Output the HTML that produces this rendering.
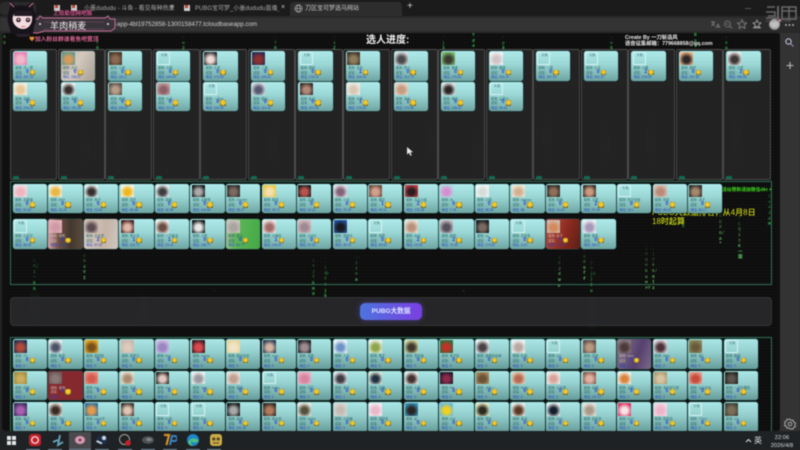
<!DOCTYPE html>
<html lang="zh"><head><meta charset="utf-8"><title>刀区宝可梦选马网站</title>
<style>
*{box-sizing:border-box;margin:0;padding:0}
html,body{width:800px;height:450px;overflow:hidden;background:#232323}
body{font-family:"Liberation Sans","Noto Sans CJK SC",sans-serif;position:relative}
#w{position:absolute;inset:0;filter:blur(.4px)}
.a{position:absolute}
#tabs{left:0;top:0;width:800px;height:17px;background:#1b1b1b}
#bar{left:0;top:16px;width:800px;height:17px;background:#292929}
#field{left:0;top:18px;width:747px;height:13px;background:#333;border-radius:0 7px 7px 0}
.t{font-size:6px;color:#a9a9a9;white-space:nowrap;line-height:8px}
#page{left:2px;top:33px;width:778px;height:398px;border-radius:4px;overflow:hidden;background-color:#0b0b0b;background-image:linear-gradient(90deg,#121212 1px,transparent 1px),linear-gradient(#121212 1px,transparent 1px);background-size:3px 3px}
#side{left:780px;top:33px;width:20px;height:399px;background:#333}
#task{left:0;top:431px;width:800px;height:19px;background:#1f2224}
.r{position:absolute;width:5px;font:bold 4.6px/5.6px "Liberation Mono",monospace;color:#35b04a;word-break:break-all;-webkit-mask-image:linear-gradient(transparent,#000 80%)}
.st{position:absolute;width:10px;background:linear-gradient(transparent,rgba(50,120,50,.22),transparent);border-radius:5px}
#cols{left:8px;top:15.5px;width:761px;height:131px;display:grid;grid-template-columns:repeat(16,1fr)}
.col{background:rgba(36,36,36,.94);border:1.5px solid #4b4b4b;border-radius:2px;margin-right:.4px;padding:1.6px 0 0 2px;position:relative}
.col::after{content:"";position:absolute;left:2px;bottom:-.5px;width:6px;height:2.6px;background:#0f6b52;border-radius:1px 1px 0 0}
.k{position:relative;width:34.3px;height:29.6px;border-radius:2.5px;background:linear-gradient(#aeeaea 0,#9ad6d4 45%,#6ea5a3 100%);box-shadow:0 0 0 .5px #234c49;margin-bottom:1.1px;overflow:hidden;display:block}
.h{background:linear-gradient(#aae6e6 0,#94cfcd 45%,#669c9a 100%);box-shadow:0 0 0 .7px #123330}
.k i{position:absolute;left:1.2px;top:1px;width:13px;height:12.5px;border-radius:.8px;background:radial-gradient(circle at 50% 58%,var(--b) 30%,var(--a) 78%)}
.k i.n{background:none;border:.4px solid #d6f2f2;font:normal 3.2px/4px "Liberation Sans","Noto Sans CJK SC",sans-serif;color:#4f8080;padding-left:3px}
.k p{position:absolute;left:2.4px;font-size:3.2px;line-height:4px;color:#276464;white-space:nowrap}
.k p:nth-of-type(1){top:14.8px}
.k p:nth-of-type(2){top:19.6px}
.k p:nth-of-type(3){top:24.2px;color:#2444c4}
.k p:nth-of-type(2)::after{content:"";position:absolute;left:14.6px;top:-1px;width:5.4px;height:5.4px;border-radius:1.2px;background:radial-gradient(circle at 50% 42%,#f5c828 45%,#4d4a24 82%)}
.k b{position:absolute;left:13px;top:18.7px;font-size:5px;line-height:5.6px;color:#2444cc}
.g{position:absolute;display:grid;column-gap:1.25px}
.box{position:absolute;border:1px solid #2f6f57}
.s1{background:linear-gradient(120deg,#b9ada5,#d2c9bf 45%,#a69c92)}
.s2{background:linear-gradient(90deg,#d8a5ad 0,#6e5045 30%,#43382f 65%,#5a4a3e)}
.s3{background:linear-gradient(100deg,#d5cec8,#c5b3a6 60%,#cfc7c1)}
.s4{background:linear-gradient(100deg,#b6c0b0 0,#5cb558 35%,#43a845)}
.s5{background:linear-gradient(110deg,#b4524a,#8d2a20 55%,#5a2016)}
.s6{background:#85292f}
.s7{background:linear-gradient(110deg,#827a8a,#57406f 60%,#7a6a88)}
.s2 p,.s5 p,.s6 p,.s7 p{color:#c9b8a8}
.y{position:absolute;color:#d2df14;font-size:8px;line-height:9px;white-space:nowrap;font-weight:500}
.tb{position:absolute;top:433px;width:14px;height:14px;opacity:.92}
.ul{position:absolute;top:449px;height:1px;width:14px;background:#7c92a4}
</style></head><body><div id="w">

<div class="a" id="tabs"></div>
<div class="a" style="left:290px;top:2px;width:112px;height:15px;background:#2d2d2d;border-radius:4px 4px 0 0"></div>
<div class="a" id="bar"></div>
<div class="a" id="field"></div>
<div class="a" style="left:0;top:2px;width:36px;height:13px;background:#2b2b2b;border-radius:4px"></div>

<svg class="a" style="left:54px;top:4px" width="30" height="9"><rect x="0" y="1" width="6" height="6" fill="#ccc"/><rect x="1" y="1" width="3" height="3" fill="#b43"/><rect x="17" y="1" width="6" height="6" fill="#ccc"/><rect x="18" y="1" width="3" height="3" fill="#b43"/></svg>
<div class="a t" style="left:84px;top:5px">小墨dududu - 斗鱼 - 看见每种热爱</div>
<div class="a t" style="left:170px;top:4px;font-size:7px;color:#ccc">×</div>
<svg class="a" style="left:184px;top:4px" width="8" height="9"><rect x="0" y="1" width="6" height="6" fill="#ccc"/><rect x="1" y="1" width="3" height="3" fill="#b43"/></svg>
<div class="a t" style="left:195px;top:5px;width:84px;overflow:hidden">PUBG宝可梦_小墨dududu直播_小</div>
<div class="a t" style="left:281px;top:4px;font-size:7px;color:#ccc">×</div>
<svg class="a" style="left:294px;top:4px" width="9" height="9" fill="none" stroke="#aaa" stroke-width=".7"><circle cx="4.5" cy="4.5" r="3.6"/><ellipse cx="4.5" cy="4.5" rx="1.6" ry="3.6"/><path d="M1 4.5h7"/></svg>
<div class="a t" style="left:305px;top:5px;color:#c9c9c9">刀区宝可梦选马网站</div>
<div class="a t" style="left:407px;top:3px;font-size:10px;color:#ccc">+</div>
<div class="a" style="left:745px;top:7.5px;width:6px;height:1px;background:#555"></div>

<div class="a t" style="left:115px;top:21px;color:#cfcfcf;font-size:6.2px">-app-4bl19752858-1300158477.tcloudbaseapp.com</div>
<svg class="a" style="left:708px;top:18px" width="90" height="13" fill="none" stroke="#808080" stroke-width=".8"><path d="M3 4h4M5 3v1M3.5 8 6.5 4.5M4 5l3 3M8 10l2-4 2 4M8.7 8.8h2.6"/><circle cx="19.5" cy="6" r="3"/><path d="M18 6h3M21.7 8.2 24 10.3"/><path d="M34 1.8l1.4 3 3.2.3-2.4 2.1.8 3.2-3-1.7-3 1.7.8-3.2-2.4-2.1 3.2-.3z"/><path stroke="#aaa" d="M49 2l1.2 2.6 2.8.3-2.1 1.9.7 2.8-2.6-1.5-2.6 1.5.7-2.8-2.1-1.9 2.8-.3zM45 9.8h8"/><g stroke="none" fill="#aaa"><circle cx="78" cy="7" r="1"/><circle cx="81.5" cy="7" r="1"/><circle cx="85" cy="7" r="1"/></g></svg>
<div class="a" style="left:769px;top:19px;width:11px;height:11px;border-radius:50%;background:radial-gradient(circle at 50% 40%,#c0c0c0 40%,#7a7a7a 80%)"></div>
<div class="a" style="left:778px;top:19px;width:3px;height:3px;border-radius:50%;background:#e9a"></div>

<svg class="a" style="left:765px;top:5px" width="33" height="18" fill="none" stroke="#666" stroke-width="1.6"><path d="M2 2h8M1 7h9v4H3M1 13h11"/><path d="M13 1v15" stroke-width="2"/><rect x="17" y="2" width="14" height="12"/><path d="M17 6h14M24 2v12"/></svg>
<div class="a t" style="left:766px;top:17px;font-size:4px;color:#666">DOUYU.COM</div>

<div class="a" id="page">
 <div class="r" style="left:1px;top:2px;height:16px;-webkit-mask-image:none;color:#3d8f3f">AU</div>
 <div class="r" style="left:94px;top:2px;height:14px">Kf9</div>
 <div class="r" style="left:180px;top:2px;height:14px">Xm2</div>
 <div class="r" style="left:272px;top:2px;height:14px">c7Q</div>
 <div class="r" style="left:331px;top:2px;height:14px">t1Z</div>
 <div class="r" style="left:440px;top:2px;height:14px">Vj3</div>
 <div class="r" style="left:470px;top:0;height:16px;-webkit-mask-image:none;color:#2fb84a">Yd4k</div>
 <div class="r" style="left:500px;top:2px;height:14px">Hp8</div>
 <div class="r" style="left:608px;top:2px;height:14px">Lw5</div>
 <div class="r" style="left:692px;top:0;height:16px;-webkit-mask-image:none;color:#2fb84a">Rn6</div>
 <div class="r" style="left:723px;top:2px;height:14px">E0u</div>

 <div class="r" style="left:31px;top:220px;height:44px">i0N]1~KS</div>
 <div class="r" style="left:81px;top:215px;height:34px;color:#58c860">-U04VI</div>
 <div class="r" style="left:310px;top:220px;height:44px">6h0J7KM9</div>
 <div class="r" style="left:322px;top:222px;height:44px">1~I中T7j0</div>
 <div class="r" style="left:353px;top:217px;height:39px;color:#58c860">C\~17&gt;A</div>
 <div class="r" style="left:556px;top:217px;height:44px;color:#78d870">TTCJdWF</div>
 <div class="r" style="left:581px;top:216px;height:34px;color:#68d060">tOONff</div>
 <div class="r" style="left:588px;top:222px;height:44px">CUu[OjIu</div>
 <div class="r" style="left:643px;top:208px;height:60px;color:#68d060">D1OUnkuw&gt;?</div>
 <div class="r" style="left:650px;top:208px;height:60px;color:#68d060">fr|7kK/NIz</div>
 <div class="r" style="left:717px;top:170px;height:50px;color:#68d060">Z9o@XG/A*</div>
 <div class="r" style="left:736px;top:172px;height:56px;color:#58c860">I0rCQ17K一面</div>
 <div class="r" style="left:766px;top:150px;height:50px">X3QeaJ#M</div>
 <div class="r" style="left:680px;top:180px;height:18px">d8Z</div>
 <div class="r" style="left:211px;top:256px;height:10px">7</div>
 <div class="r" style="left:460px;top:256px;height:10px">4</div>

 <div class="st" style="left:78px;top:85px;height:60px"></div>
 <div class="st" style="left:112px;top:70px;height:75px"></div>
 <div class="st" style="left:266px;top:80px;height:65px"></div>
 <div class="st" style="left:426px;top:70px;height:75px"></div>
 <div class="st" style="left:470px;top:90px;height:55px"></div>
 <div class="st" style="left:540px;top:70px;height:70px"></div>
 <div class="st" style="left:598px;top:80px;height:65px"></div>
 <div class="st" style="left:644px;top:70px;height:75px"></div>
 <div class="st" style="left:730px;top:60px;height:85px"></div>
 <div class="st" style="left:28px;top:255px;height:40px;background:linear-gradient(transparent,rgba(60,160,60,.16),transparent)"></div>
 <div class="st" style="left:136px;top:260px;height:36px;background:linear-gradient(transparent,rgba(60,160,60,.16),transparent)"></div>
 <div class="st" style="left:585px;top:262px;height:36px;background:linear-gradient(transparent,rgba(60,160,60,.22),transparent)"></div>

 <div class="a" id="cols">
  <div class="col">
   <div class="k"><i style="--a:#e87fb4;--b:#f3b7c9"></i><p>昵称: 牛一蛋</p><p>冠军:</p><b>0</b><p>地位: 267.16</p></div>
   <div class="k"><i style="--a:#f6efe0;--b:#e8c79a"></i><p>昵称: 初雨</p><p>冠军:</p><b>0</b><p>地位: 204.01</p></div>
  </div>
  <div class="col">
   <div class="k s1"><i style="--a:#5e9a8d;--b:#d89a5a"></i><p>昵称: 大白</p><p>冠军:</p><b>0</b><p>地位: 236.97</p></div>
   <div class="k"><i style="--a:#efefef;--b:#38302e"></i><p>昵称: 家明</p><p>冠军:</p><b>0</b><p>地位: 191.08</p></div>
  </div>
  <div class="col">
   <div class="k"><i style="--a:#4a3427;--b:#8a6a52"></i><p>昵称: 小夜</p><p>冠军:</p><b>0</b><p>地位: 181.2</p></div>
   <div class="k"><i style="--a:#5d4e45;--b:#b59d8a"></i><p>昵称: 老师</p><p>冠军:</p><b>0</b><p>地位: 206.67</p></div>
  </div>
  <div class="col">
   <div class="k"><i class="n">头像</i><p>昵称: 小熊</p><p>冠军:</p><b>0</b><p>地位: 349.94</p></div>
   <div class="k"><i style="--a:#c3a3a8;--b:#8d5f66"></i><p>昵称: 九朵</p><p>冠军:</p><b>0</b><p>地位: 217.6</p></div>
  </div>
  <div class="col">
   <div class="k"><i style="--a:#2e2a2c;--b:#ead9d4"></i><p>昵称: 小墨</p><p>冠军:</p><b>0</b><p>地位: 173.98</p></div>
   <div class="k"><i class="n">头像</i><p>昵称: 一只nn</p><p>冠军:</p><b>0</b><p>地位: 133.39</p></div>
  </div>
  <div class="col">
   <div class="k"><i style="--a:#2a2a55;--b:#8c3030"></i><p>昵称: 三鬼</p><p>冠军:</p><b>0</b><p>地位: 169.61</p></div>
   <div class="k"><i style="--a:#d8d8e0;--b:#55586e"></i><p>昵称: 狐仙</p><p>冠军:</p><b>0</b><p>地位: 110.42</p></div>
  </div>
  <div class="col">
   <div class="k"><i class="n">头像</i><p>昵称: 刚好</p><p>冠军:</p><b>0</b><p>地位: 278.13</p></div>
   <div class="k"><i style="--a:#3a2a26;--b:#b08878"></i><p>昵称: 彭元</p><p>冠军:</p><b>0</b><p>地位: 207.63</p></div>
  </div>
  <div class="col">
   <div class="k"><i style="--a:#3d3328;--b:#8e7a5c"></i><p>昵称: 化化</p><p>冠军:</p><b>1</b><p>地位: 424.42</p></div>
   <div class="k"><i style="--a:#f0ebe4;--b:#d8c6b4"></i><p>昵称: 大禾</p><p>冠军:</p><b>1</b><p>地位: 176.63</p></div>
  </div>
  <div class="col">
   <div class="k"><i style="--a:#dcdcdc;--b:#4a4a4a"></i><p>昵称: 阿土</p><p>冠军:</p><b>0</b><p>地位: 312.73</p></div>
   <div class="k"><i style="--a:#e8d5c6;--b:#c49b80"></i><p>昵称: 流水</p><p>冠军:</p><b>1</b><p>地位: 170.66</p></div>
  </div>
  <div class="col">
   <div class="k"><i style="--a:#79b86e;--b:#3b3a2e"></i><p>昵称: 佛宝</p><p>冠军:</p><b>0</b><p>地位: 275.53</p></div>
   <div class="k"><i style="--a:#e6e0dc;--b:#2a2526"></i><p>昵称: 老何</p><p>冠军:</p><b>0</b><p>地位: 108.42</p></div>
  </div>
  <div class="col">
   <div class="k"><i style="--a:#f3f3f3;--b:#cfc4c6"></i><p>昵称: 佛宝</p><p>冠军:</p><b>0</b><p>地位: 432.14</p></div>
   <div class="k"><i class="n">头像</i><p>昵称: 云菜川</p><p>冠军:</p><b>0</b><p>地位: 90.62</p></div>
  </div>
  <div class="col"><div class="k"><i class="n">头像</i><p>昵称: 一笑</p><p>冠军:</p><b>0</b><p>地位: 297.00</p></div></div>
  <div class="col"><div class="k"><i class="n">头像</i><p>昵称: 小五</p><p>冠军:</p><b>0</b><p>地位: 442.22</p></div></div>
  <div class="col"><div class="k"><i class="n">头像</i><p>昵称: 小鹿</p><p>冠军:</p><b>2</b><p>地位: 678.99</p></div></div>
  <div class="col"><div class="k"><i style="--a:#f0b48a;--b:#2c2624"></i><p>昵称: 胡材</p><p>冠军:</p><b>0</b><p>地位: 297.65</p></div></div>
  <div class="col"><div class="k"><i style="--a:#ede6e6;--b:#3d3536"></i><p>昵称: 小墨</p><p>冠军:</p><b>2</b><p>地位: 498.66</p></div></div>
 </div>

 <div class="box" style="left:7.5px;top:148px;width:762px;height:104px"></div>
 <div class="a" style="color:#3fe01e;font-size:4.8px;font-weight:bold;white-space:nowrap;top:153px;left:720px;width:50px;overflow:hidden">活动赞助请加微信dkt +</div>
 <div class="y" style="left:650px;top:174.5px">PUBG大数据排名，从4月8日</div>
 <div class="y" style="left:650px;top:184px">18时起算</div>
 <div class="g" style="left:10.7px;top:150.7px;grid-template-columns:repeat(20,34.3px);row-gap:4.7px">
  <div class="k"><i style="--a:#f4dbe0;--b:#eeb4c0"></i><p>昵称: 喜爱猫</p><p>冠军:</p><b>0</b><p>地位: 51.60</p></div>
  <div class="k"><i style="--a:#f2f0ea;--b:#e8b840"></i><p>昵称: AXX</p><p>冠军:</p><b>0</b><p>地位: 32.24</p></div>
  <div class="k"><i style="--a:#efefef;--b:#33302f"></i><p>昵称: 冉子</p><p>冠军:</p><b>0</b><p>地位: 23.60</p></div>
  <div class="k"><i style="--a:#f7f3e8;--b:#f0b820"></i><p>昵称: 霞气</p><p>冠军:</p><b>0</b><p>地位: 80.38</p></div>
  <div class="k"><i style="--a:#ededed;--b:#3e3e3e"></i><p>昵称: 周瑜</p><p>冠军:</p><b>0</b><p>地位: 42.99</p></div>
  <div class="k"><i style="--a:#161616;--b:#aaaaaa"></i><p>昵称: 无聊哥</p><p>冠军:</p><b>0</b><p>地位: 143.64</p></div>
  <div class="k"><i style="--a:#2e2b2a;--b:#7c6a60"></i><p>昵称: mmmm</p><p>冠军:</p><b>0</b><p>地位: 58.27</p></div>
  <div class="k"><i style="--a:#e9c840;--b:#f4dfb0"></i><p>昵称: 故班</p><p>冠军:</p><b>0</b><p>地位: 35.71</p></div>
  <div class="k"><i style="--a:#231a1a;--b:#b8544e"></i><p>昵称: 高雄</p><p>冠军:</p><b>0</b><p>地位: 42.32</p></div>
  <div class="k"><i style="--a:#e6dce0;--b:#80627a"></i><p>昵称: 少白</p><p>冠军:</p><b>0</b><p>地位: 70.29</p></div>
  <div class="k"><i style="--a:#6c4a3e;--b:#d5a18e"></i><p>昵称: 曦华</p><p>冠军:</p><b>1</b><p>地位: 40.11</p></div>
  <div class="k"><i style="--a:#c23a44;--b:#2a1c20"></i><p>昵称: 花石小妖</p><p>冠军:</p><b>2</b><p>地位: 178.38</p></div>
  <div class="k"><i style="--a:#b4d4e0;--b:#d58fd0"></i><p>昵称: 2k</p><p>冠军:</p><b>0</b><p>地位: 7.76</p></div>
  <div class="k"><i style="--a:#f2f6f4;--b:#d6dcd8"></i><p>昵称: 小薇</p><p>冠军:</p><b>0</b><p>地位: 88.38</p></div>
  <div class="k"><i style="--a:#efe6d8;--b:#d2b190"></i><p>昵称: sakuya</p><p>冠军:</p><b>0</b><p>地位: 88</p></div>
  <div class="k"><i style="--a:#2f2a24;--b:#90705a"></i><p>昵称: 阿枫</p><p>冠军:</p><b>0</b><p>地位: 14.03</p></div>
  <div class="k"><i style="--a:#3a2d26;--b:#c99a7e"></i><p>昵称: 文君</p><p>冠军:</p><b>2</b><p>地位: 97.99</p></div>
  <div class="k"><i class="n">头像</i><p>昵称: 吃仔省钱</p><p>冠军:</p><b>0</b><p>地位: 19.1</p></div>
  <div class="k"><i style="--a:#d8c0b4;--b:#b98a78"></i><p>昵称: 阿岳</p><p>冠军:</p><b>0</b><p>地位: 80.06</p></div>
  <div class="k"><i style="--a:#2e2a26;--b:#a6886e"></i><p>昵称: 泽子</p><p>冠军:</p><b>0</b><p>地位: 83.17</p></div>

  <div class="k"><i class="n">头像</i><p>昵称: 小月巴</p><p>冠军:</p><b>0</b><p>地位: 68.25</p></div>
  <div class="k s2"><i style="--a:#e3b2bb;--b:#cf9aa4"></i><p>昵称: 鸭鸭</p><p>冠军:</p><b>0</b><p>地位: 25.60</p></div>
  <div class="k s3"><i style="--a:#c9b7ac;--b:#5c4c52"></i><p>昵称: 大大虎</p><p>冠军:</p><b>2</b><p>地位: 67.02</p></div>
  <div class="k"><i style="--a:#4a2020;--b:#e0b8a8"></i><p>昵称: 黄小青</p><p>冠军:</p><b>1</b><p>地位: 102.71</p></div>
  <div class="k"><i style="--a:#f2ece6;--b:#6a4c44"></i><p>昵称: 一只猛龙</p><p>冠军:</p><b>1</b><p>地位: 23.41</p></div>
  <div class="k"><i style="--a:#141414;--b:#e6e6e6"></i><p>昵称: 小哲</p><p>冠军:</p><b>0</b><p>地位: 198.77</p></div>
  <div class="k s4"><i style="--a:#c9c4c0;--b:#aaa4a0"></i><p>昵称: 皮卡</p><p>冠军:</p><b>0</b><p>地位: 81.77</p></div>
  <div class="k"><i style="--a:#f2e6e4;--b:#a06a68"></i><p>昵称: 小神志</p><p>冠军:</p><b>1</b><p>地位: 104.47</p></div>
  <div class="k"><i style="--a:#d8b8bc;--b:#9e8a92"></i><p>昵称: 小000</p><p>冠军:</p><b>0</b><p>地位: 67.52</p></div>
  <div class="k"><i style="--a:#2452a0;--b:#1a1a1e"></i><p>昵称: 愤怒大</p><p>冠军:</p><b>0</b><p>地位: 39.19</p></div>
  <div class="k"><i class="n">头像</i><p>昵称: 胡贾</p><p>冠军:</p><b>0</b><p>地位: 83.63</p></div>
  <div class="k"><i style="--a:#eee0d4;--b:#b8927c"></i><p>昵称: AAS</p><p>冠军:</p><b>2</b><p>地位: 23.94</p></div>
  <div class="k"><i style="--a:#c8c0c4;--b:#54505a"></i><p>昵称: 欧阳</p><p>冠军:</p><b>2</b><p>地位: 72.59</p></div>
  <div class="k"><i style="--a:#181a1c;--b:#7a6a60"></i><p>昵称: xx</p><p>冠军:</p><b>2</b><p>地位: 173.62</p></div>
  <div class="k"><i class="n">头像</i><p>昵称: 芬伦色</p><p>冠军:</p><b>0</b><p>地位: 4.24</p></div>
  <div class="k s5"><i style="--a:#cdbdb4;--b:#d48a5c"></i><p>昵称: 赤子</p><p>冠军:</p><b>0</b><p>地位: 78.99</p></div>
  <div class="k"><i style="--a:#f2f0f2;--b:#a698b8"></i><p>昵称: 紫色</p><p>冠军:</p><b>0</b><p>地位: 58.17</p></div>
 </div>

 <div class="a" style="left:8px;top:263.5px;width:762px;height:29px;background:rgba(40,40,42,.96);border:1px solid #343436;border-radius:4px"></div>
 <div class="a" style="left:358px;top:269.7px;width:62px;height:17.5px;border-radius:5px;background:linear-gradient(90deg,#4d74de,#7a3fe2);box-shadow:0 0 6px rgba(110,90,240,.45);color:#dfe6ff;font-size:6.6px;font-weight:bold;text-align:center;line-height:17.5px">PUBG大数据</div>

 <div class="box" style="left:7.5px;top:303.7px;width:762px;height:100px"></div>
 <div class="g" id="g3" style="left:10.7px;top:306.4px;grid-template-columns:repeat(21,34.3px);row-gap:.7px">
  <div class="k h"><i style="--a:#233050;--b:#b04a3c"></i><p>昵称: TY</p><p>冠军:</p><b>0</b><p>地位: 0</p></div>
  <div class="k h"><i style="--a:#eeeeee;--b:#4a5468"></i><p>昵称: 私信</p><p>冠军:</p><b>0</b><p>地位: 0</p></div>
  <div class="k h"><i style="--a:#e6a824;--b:#78501c"></i><p>昵称: 眉须班</p><p>冠军:</p><b>0</b><p>地位: 0</p></div>
  <div class="k h"><i style="--a:#c8b8a8;--b:#dccabc"></i><p>昵称: 张学凡</p><p>冠军:</p><b>0</b><p>地位: 0</p></div>
  <div class="k h"><i style="--a:#cfc0e6;--b:#9a86c0"></i><p>昵称: hua</p><p>冠军:</p><b>0</b><p>地位: 0</p></div>
  <div class="k h"><i style="--a:#351a20;--b:#d84a4e"></i><p>昵称: momo</p><p>冠军:</p><b>0</b><p>地位: 0</p></div>
  <div class="k h"><i style="--a:#e6d49a;--b:#f0e4c6"></i><p>昵称: 超出北京</p><p>冠军:</p><b>0</b><p>地位: 0</p></div>
  <div class="k h"><i style="--a:#2c3a52;--b:#d2b4a0"></i><p>昵称: xuxu</p><p>冠军:</p><b>0</b><p>地位: 0</p></div>
  <div class="k h"><i style="--a:#201f24;--b:#9c8c90"></i><p>昵称: 四张</p><p>冠军:</p><b>0</b><p>地位: 0</p></div>
  <div class="k h"><i style="--a:#f3f4f6;--b:#6d94c8"></i><p>昵称: 人头</p><p>冠军:</p><b>0</b><p>地位: 0</p></div>
  <div class="k h"><i style="--a:#eef0e6;--b:#8ea64a"></i><p>昵称: 秀才</p><p>冠军:</p><b>0</b><p>地位: 0</p></div>
  <div class="k h"><i style="--a:#d2d8a0;--b:#40382c"></i><p>昵称: 李欣鑫</p><p>冠军:</p><b>0</b><p>地位: 0</p></div>
  <div class="k h"><i style="--a:#2b6e36;--b:#c0322a"></i><p>昵称: 林子民</p><p>冠军:</p><b>0</b><p>地位: 0</p></div>
  <div class="k h"><i style="--a:#f0f0f0;--b:#4a4246"></i><p>昵称: 魔鬼的朵棒</p><p>冠军:</p><b>0</b><p>地位: 0</p></div>
  <div class="k h"><i style="--a:#f4f4f4;--b:#b8a8a0"></i><p>昵称: 礼伯</p><p>冠军:</p><b>0</b><p>地位: 0</p></div>
  <div class="k h"><i class="n">头像</i><p>昵称: xxx</p><p>冠军:</p><b>0</b><p>地位: 0</p></div>
  <div class="k h"><i style="--a:#5a4a48;--b:#b89a80"></i><p>昵称: 四块</p><p>冠军:</p><b>0</b><p>地位: 0</p></div>
  <div class="k s7"><i style="--a:#8a7a80;--b:#4c3a38"></i><p>昵称: Neo</p><p>冠军:</p><b>0</b><p>地位: 0</p></div>
  <div class="k h"><i style="--a:#e6d8e0;--b:#4a3238"></i><p>昵称: Alinx</p><p>冠军:</p><b>0</b><p>地位: 0</p></div>
  <div class="k h"><i style="--a:#8a8a5c;--b:#6a5a3c"></i><p>昵称: 者1</p><p>冠军:</p><b>0</b><p>地位: 0</p></div>
  <div class="k h"><i class="n">头像</i><p>昵称: 殷姐</p><p>冠军:</p><b>0</b><p>地位: 0</p></div>

  <div class="k h"><i style="--a:#a58c3c;--b:#c8ac60"></i><p>昵称: 四张</p><p>冠军:</p><b>0</b><p>地位: 0</p></div>
  <div class="k s6"><i style="--a:#6a5c5c;--b:#8a7876"></i><p>昵称: 海海</p><p>冠军:</p><b>0</b><p>地位: 0</p></div>
  <div class="k h"><i style="--a:#e88a7c;--b:#d45a50"></i><p>昵称: Kri</p><p>冠军:</p><b>0</b><p>地位: 0</p></div>
  <div class="k h"><i style="--a:#e8e0d0;--b:#a88a70"></i><p>昵称: 牙牙</p><p>冠军:</p><b>0</b><p>地位: 0</p></div>
  <div class="k h"><i style="--a:#2a2220;--b:#e0c8c0"></i><p>昵称: Dr2</p><p>冠军:</p><b>0</b><p>地位: 0</p></div>
  <div class="k h"><i style="--a:#f2f2f2;--b:#9a9a9e"></i><p>昵称: Just</p><p>冠军:</p><b>0</b><p>地位: 0</p></div>
  <div class="k h"><i style="--a:#eae0da;--b:#c0a090"></i><p>昵称: 南南</p><p>冠军:</p><b>0</b><p>地位: 0</p></div>
  <div class="k h"><i class="n">头像</i><p>昵称: moru</p><p>冠军:</p><b>0</b><p>地位: 0</p></div>
  <div class="k h"><i style="--a:#eab0c0;--b:#d884a0"></i><p>昵称: 叮叮</p><p>冠军:</p><b>0</b><p>地位: 0</p></div>
  <div class="k h"><i style="--a:#e8e6e8;--b:#3c3a44"></i><p>昵称: 黄子</p><p>冠军:</p><b>0</b><p>地位: 0</p></div>
  <div class="k h"><i style="--a:#dfe2d0;--b:#203044"></i><p>昵称: 沈海</p><p>冠军:</p><b>0</b><p>地位: 0</p></div>
  <div class="k h"><i style="--a:#eeeae6;--b:#40302e"></i><p>昵称: 小熊</p><p>冠军:</p><b>0</b><p>地位: 0</p></div>
  <div class="k h"><i style="--a:#201828;--b:#8a2a48"></i><p>昵称: Pin</p><p>冠军:</p><b>0</b><p>地位: 0</p></div>
  <div class="k h"><i style="--a:#a88a5e;--b:#6a5238"></i><p>昵称: 大仙一</p><p>冠军:</p><b>0</b><p>地位: 0</p></div>
  <div class="k h"><i style="--a:#e0d0b8;--b:#b86850"></i><p>昵称: Ry8y</p><p>冠军:</p><b>0</b><p>地位: 0</p></div>
  <div class="k h"><i style="--a:#f2ece6;--b:#d8a49a"></i><p>昵称: 小青荷</p><p>冠军:</p><b>0</b><p>地位: 0</p></div>
  <div class="k h"><i style="--a:#8a5a4e;--b:#e0b0a0"></i><p>昵称: 玩吧</p><p>冠军:</p><b>0</b><p>地位: 147.07</p></div>
  <div class="k h"><i style="--a:#f4f0ea;--b:#d8843c"></i><p>昵称: 太阳</p><p>冠军:</p><b>0</b><p>地位: 0</p></div>
  <div class="k h"><i style="--a:#b09a70;--b:#d8c4a0"></i><p>昵称: 半户起力房</p><p>冠军:</p><b>0</b><p>地位: 0</p></div>
  <div class="k h"><i style="--a:#e0a090;--b:#c84a3c"></i><p>昵称: 瓜瓜比比</p><p>冠军:</p><b>0</b><p>地位: 0</p></div>
  <div class="k h"><i style="--a:#24221e;--b:#5a544a"></i><p>昵称: 一万叶藏风</p><p>冠军:</p><b>0</b><p>地位: 0</p></div>

  <div class="k h"><i style="--a:#3a2a5a;--b:#a860b0"></i><p>昵称: 猫子</p><p>冠军:</p><b>0</b><p>地位: 0</p></div>
  <div class="k h"><i style="--a:#e6e2dc;--b:#3a2a24"></i><p>昵称: 寻ip</p><p>冠军:</p><b>0</b><p>地位: 0</p></div>
  <div class="k h"><i style="--a:#2f6ea0;--b:#e09a4a"></i><p>昵称: ceshi子</p><p>冠军:</p><b>0</b><p>地位: 0</p></div>
  <div class="k h"><i style="--a:#40302a;--b:#e0c4b4"></i><p>昵称: 赤小虫</p><p>冠军:</p><b>0</b><p>地位: 0</p></div>
  <div class="k h"><i class="n">头像</i><p>昵称: xu品</p><p>冠军:</p><b>0</b><p>地位: 0</p></div>
  <div class="k h"><i class="n">头像</i><p>昵称: Dxo</p><p>冠军:</p><b>0</b><p>地位: 0</p></div>
  <div class="k h"><i style="--a:#141414;--b:#a8a8a8"></i><p>昵称: 烧烧</p><p>冠军:</p><b>0</b><p>地位: 241.92</p></div>
  <div class="k h"><i style="--a:#2e2622;--b:#b07a5c"></i><p>昵称: 林大叔</p><p>冠军:</p><b>0</b><p>地位: 0</p></div>
  <div class="k h"><i style="--a:#ede8e0;--b:#54503c"></i><p>昵称: dome</p><p>冠军:</p><b>0</b><p>地位: 0</p></div>
  <div class="k h"><i style="--a:#d8d8d4;--b:#c4bcb4"></i><p>昵称: 小幼崽</p><p>冠军:</p><b>0</b><p>地位: 0</p></div>
  <div class="k h"><i style="--a:#f4ecf0;--b:#eab8c8"></i><p>昵称: 酒旺旺</p><p>冠军:</p><b>0</b><p>地位: 0</p></div>
  <div class="k h"><i style="--a:#3a90b8;--b:#282422"></i><p>昵称: 虹</p><p>冠军:</p><b>0</b><p>地位: 0</p></div>
  <div class="k h"><i style="--a:#66b8e0;--b:#f0d020"></i><p>昵称: 小G</p><p>冠军:</p><b>0</b><p>地位: 0</p></div>
  <div class="k h"><i style="--a:#e8e8c0;--b:#2a2a20"></i><p>昵称: 雪仙</p><p>冠军:</p><b>0</b><p>地位: 0</p></div>
  <div class="k h"><i style="--a:#f0eeea;--b:#5a3a26"></i><p>昵称: 幸运</p><p>冠军:</p><b>0</b><p>地位: 0</p></div>
  <div class="k h"><i style="--a:#eeeeee;--b:#14202e"></i><p>昵称: Zexi</p><p>冠军:</p><b>0</b><p>地位: 0</p></div>
  <div class="k h"><i style="--a:#e8e4dc;--b:#a89888"></i><p>昵称: 前前世</p><p>冠军:</p><b>0</b><p>地位: 0</p></div>
  <div class="k h"><i style="--a:#e03060;--b:#f4e4e4"></i><p>昵称: xOO</p><p>冠军:</p><b>0</b><p>地位: 0</p></div>
  <div class="k h"><i style="--a:#f4d8e4;--b:#eeb4c8"></i><p>昵称: 的咕咕</p><p>冠军:</p><b>0</b><p>地位: 209.7</p></div>
  <div class="k h"><i class="n">头像</i><p>昵称: 77xxx</p><p>冠军:</p><b>0</b><p>地位: 0</p></div>
  <div class="k h"><i style="--a:#3c4036;--b:#7a6e58"></i><p>昵称: xxx</p><p>冠军:</p><b>0</b><p>地位: 0</p></div>
 </div>

 <div class="a" style="left:364px;top:2px;color:#f2f2f2;font:bold 10px/12px 'Liberation Sans','Noto Sans CJK SC',sans-serif;white-space:nowrap">选人进度:</div>
 <div class="a" style="left:623px;top:2px;color:#eee;font-size:5.3px;line-height:6px;font-weight:bold;white-space:nowrap">Create By 一刀斩选风</div>
 <div class="a" style="left:623px;top:8px;color:#eee;font-size:5.3px;line-height:6px;font-weight:bold;white-space:nowrap">语音征集邮箱：779668858@qq.com</div>
 <svg class="a" style="left:405px;top:114px" width="7" height="9"><path d="M0 0v7.5l2-1.700 1.300 3 1.400-.6-1.300-2.900h2.700z" fill="#e8e8e8"/></svg>
</div>

<div class="a" id="side"></div>
<svg class="a" style="left:784px;top:37px" width="12" height="38" fill="none" stroke="#b8c0d8" stroke-width="1.100"><circle cx="4.5" cy="4.5" r="2.700"/><path d="M6.500 6.500 9.500 9.500" stroke="#a888c0"/><path d="M5 28.500h7M8.500 25v7" stroke="#bbb" transform="translate(-2.500 0)"/></svg>
<svg class="a" style="left:784px;top:418px" width="12" height="12" fill="none" stroke="#aaa" stroke-width="1"><path d="M6 1l1.200 1.500 1.900-.3.600 1.900 1.800.9-.7 1.800.7 1.800-1.800.6-.6 1.900-1.900-.3L6 11 4.800 9.800l-1.900.3-.6-1.900-1.800-.6.700-1.800-.7-1.800 1.800-.9.600-1.900 1.900.3z"/><circle cx="6" cy="6" r="1.800"/></svg>

<div class="a" id="task"></div>
<div class="a" style="left:69px;top:432px;width:22px;height:18px;background:#4a4a4e"></div>
<svg class="a" style="left:7px;top:436px" width="9" height="9" fill="#e6e6e6"><rect width="4" height="4"/><rect x="5" width="4" height="4"/><rect y="5" width="4" height="4"/><rect x="5" y="5" width="4" height="4"/></svg>
<svg class="tb" style="left:28px" viewBox="0 0 14 14"><rect x="1" y="1" width="12" height="12" rx="3" fill="#d2202c"/><circle cx="7" cy="7" r="3.300" fill="none" stroke="#fff" stroke-width="1.200"/></svg>
<svg class="tb" style="left:51px" viewBox="0 0 14 14" fill="none" stroke="#6fb4cc" stroke-width="1.800"><path d="M2 9 7 7M9 2 7 12l5-3"/></svg>
<svg class="tb" style="left:73px" viewBox="0 0 14 14"><ellipse cx="7" cy="7" rx="5" ry="4" fill="#e9a1b4"/><circle cx="7" cy="7" r="1.500" fill="#6a4a58"/></svg>
<svg class="tb" style="left:95px" viewBox="0 0 14 14"><ellipse cx="7" cy="7" rx="5.500" ry="5" fill="#1c2f4c"/><circle cx="9" cy="5" r="2.200" fill="#d4e4f0"/><path d="M1.500 8 7 10.500" stroke="#d4e4f0" stroke-width="2"/></svg>
<svg class="tb" style="left:118px" viewBox="0 0 14 14"><circle cx="6.500" cy="6.500" r="5" fill="#222" stroke="#aaa"/><circle cx="10" cy="10" r="2.800" fill="#d81e28"/></svg>
<svg class="tb" style="left:141px" viewBox="0 0 14 14"><ellipse cx="7" cy="7" rx="6" ry="3.800" fill="#555"/><ellipse cx="8" cy="6.500" rx="3" ry="1.800" fill="#888"/></svg>
<svg class="tb" style="left:163px" viewBox="0 0 14 14"><path d="M1 2h5L3.500 12" fill="none" stroke="#e69a24" stroke-width="2.200"/><path d="M7 12 9 3h2.500a2.400 2.400 0 0 1 0 5H8" fill="none" stroke="#3a8ed8" stroke-width="1.900"/></svg>
<svg class="tb" style="left:186px" viewBox="0 0 14 14"><circle cx="7" cy="7" r="6" fill="#1f8fd4"/><path d="M2 10C3 5 9 4 12.500 7.500 12 9 10 9.500 8 9.500 5.500 9.500 6 8 6.500 7.500 5 8 4 11 7 13 4.500 13 2.800 11.800 2 10z" fill="#52d08c"/></svg>
<svg class="tb" style="left:209px" viewBox="0 0 14 14"><rect x="1" y="1" width="12" height="12" rx="3" fill="#d8b84a"/><circle cx="4.800" cy="6" r="1.600" fill="#5c4a2a"/><circle cx="9.200" cy="6" r="1.600" fill="#5c4a2a"/><path d="M4 10h6" stroke="#5c4a2a"/></svg>
<div class="ul" style="left:26px"></div><div class="ul" style="left:48px"></div><div class="ul" style="left:69px;width:22px"></div><div class="ul" style="left:95px"></div><div class="ul" style="left:118px"></div><div class="ul" style="left:141px"></div><div class="ul" style="left:163px"></div><div class="ul" style="left:186px"></div><div class="ul" style="left:207px"></div>

<svg class="a" style="left:745px;top:438px" width="7" height="5" fill="none" stroke="#ddd"><path d="M1 4l2.500-2.500L6 4"/></svg>
<div class="a t" style="left:754px;top:436px;font-size:8px;line-height:10px;color:#e4e4e4">英</div>
<div class="a t" style="left:770px;top:434px;width:24px;text-align:center;font-size:5.800px;color:#d8d8d8">22:06</div>
<div class="a t" style="left:768px;top:442px;width:28px;text-align:center;font-size:5.800px;color:#d8d8d8">2026/4/8</div>

<svg class="a" style="left:0;top:0" width="120" height="44">
 <path d="M30 19h8l2-3 3 2h62l3-2 2 3h5v9l-4 3H44l-6 2H30z" fill="#39333a" stroke="#c46d94" stroke-width="1"/>
 <path d="M44 22h60M44 29h60" stroke="#8a5570" stroke-width=".4"/>
 <circle cx="40" cy="24" r="1" fill="#eee"/><circle cx="108" cy="24" r="1" fill="#eee"/>
 <path d="M9 11 11 2 16 6c3-1 7-1 10 0l6-4 2 9c3 5 2 11 0 15l-1 8H11L9 26c-2-5-2-10 0-15z" fill="#17131a"/>
 <path d="M10 3 14 7M33 3 29 7" stroke="#c46d94" stroke-width="1.200"/>
 <path d="M13 16c2-4 5-4 7-5 3 0 10 0 12 5 1 7-3 13-9 13-6 0-12-6-10-13z" fill="#f3dcdf"/>
 <path d="M15 11h17v5H14z" fill="#221a22"/>
 <circle cx="18.500" cy="20" r="2.300" fill="#3c2630"/><circle cx="28" cy="20" r="2.300" fill="#3c2630"/>
 <circle cx="18.500" cy="19.500" r=".8" fill="#fff"/><circle cx="28" cy="19.500" r=".8" fill="#fff"/>
 <path d="M21.500 26c1 1 2.500 1 3.500 0" stroke="#c33" fill="none" stroke-width=".7"/>
 <path d="M15 34h16l-3 3h-10z" fill="#2a2028"/>
</svg>
<div class="a" style="left:50px;top:20px;color:#f0f0f0;font:9px/11px 'Noto Sans CJK SC',sans-serif;letter-spacing:.1px;white-space:nowrap">羊肉稍麦</div>
<div class="a" style="left:53px;top:9.5px;color:#d0528a;font:bold 5.600px/7px 'Noto Sans CJK SC',sans-serif;white-space:nowrap">上周最佳网吧展</div>
<div class="a" style="left:29px;top:34.5px;color:#d5648f;font:bold 5.800px/7px 'Noto Sans CJK SC',sans-serif;white-space:nowrap"><span style="color:#e8902c">♥</span>加入粉丝群谁看鱼吧置顶</div>

</div></body></html>
